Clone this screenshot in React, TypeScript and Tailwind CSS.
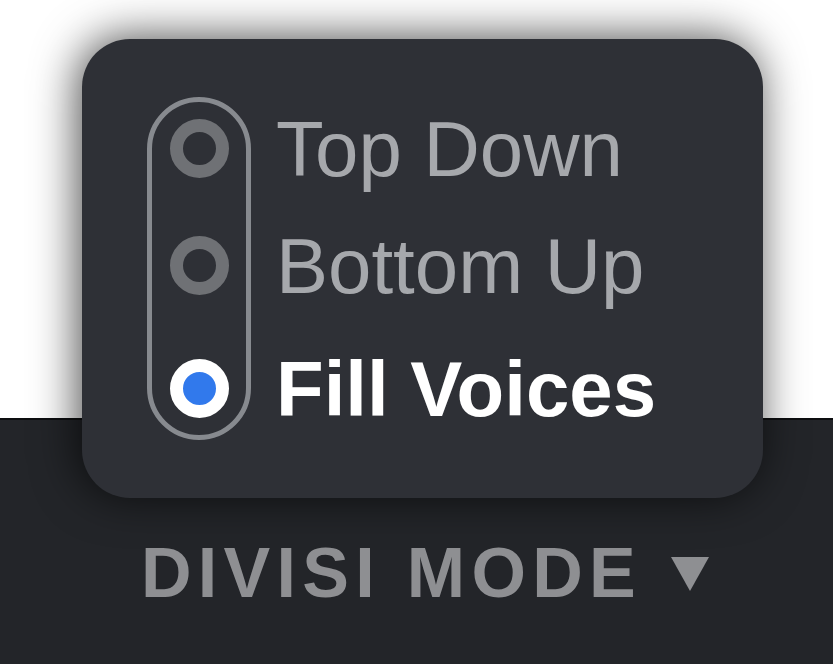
import React from 'react';

type Option = { label: string; selected?: boolean };

const options: Option[] = [
  { label: 'Top Down' },
  { label: 'Bottom Up' },
  { label: 'Fill Voices', selected: true },
];

// spacing above each row (px), taken from the reference
const rowOffsets = ['mt-[22px]', 'mt-[58px]', 'mt-[64px]'];

function Radio({ selected }: { selected?: boolean }) {
  if (selected) {
    return <div className="w-[59px] h-[59px] rounded-full border-[13px] border-white bg-[#3179ec]" />;
  }
  return <div className="w-[59px] h-[59px] rounded-full border-[13px] border-[#6f7175]" />;
}

export default function App() {
  return (
    <div
      className="relative w-[833px] h-[664px] overflow-hidden flex flex-col"
      style={{ fontFamily: '"Liberation Sans", Arial, sans-serif' }}
    >
      <div className="h-[418px] bg-white" />
      <div className="h-[2px] bg-[#0d0e10]" />
      <div className="flex-1 bg-[#232529] pt-[118px] pl-[141px]">
        <div className="flex items-center gap-[29px]">
          <span className="text-[70px] leading-none font-bold tracking-[0.09em] text-[#8e8f92]">
            DIVISI MODE
          </span>
          <svg width="38" height="34" viewBox="0 0 38 34" className="mt-[2px]">
            <polygon points="0,0 38,0 19,34" fill="#8e8f92" />
          </svg>
        </div>
      </div>

      {/* popup menu */}
      <div className="absolute left-[82px] top-[39px] w-[681px] h-[459px] rounded-[48px] bg-[#2e3036] shadow-[-4px_-2px_45px_rgba(0,0,0,0.7)] pl-[65px] pt-[58px] flex">
        <div className="w-[104px] h-[343px] rounded-full border-[5px] border-[#878a8f] flex flex-col items-center">
          {options.map((o, i) => (
            <div key={o.label} className={i === 0 ? 'mt-[17px]' : rowOffsets[i]}>
              <Radio selected={o.selected} />
            </div>
          ))}
        </div>
        <div className="ml-[25px] flex flex-col">
          {options.map((o, i) => (
            <div key={o.label} className={`${rowOffsets[i]} h-[59px] flex items-center`}>
              <span
                className={
                  o.selected
                    ? 'text-[78px] leading-none font-bold text-white whitespace-nowrap'
                    : 'text-[78px] leading-none text-[#a6a8ac] whitespace-nowrap'
                }
              >
                {o.label}
              </span>
            </div>
          ))}
        </div>
      </div>
    </div>
  );
}
